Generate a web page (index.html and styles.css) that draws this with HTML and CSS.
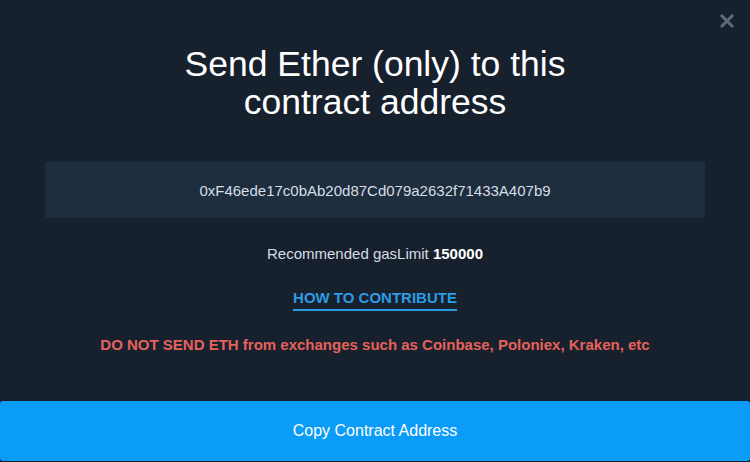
FILE: index.html
```html
<!DOCTYPE html>
<html>
<head>
<meta charset="utf-8">
<link rel="stylesheet" href="styles.css">
</head>
<body>
<div class="modal">
  <button class="close" aria-label="Close">
    <svg width="16" height="16" viewBox="0 0 16 16"><path d="M2 2 L14 14 M14 2 L2 14" stroke="#5b6b7c" stroke-width="3" stroke-linecap="butt"/></svg>
  </button>
  <h1 class="title">Send Ether (only) to this<br>contract address</h1>
  <div class="address">0xF46ede17c0bAb20d87Cd079a2632f71433A407b9</div>
  <p class="gas">Recommended gasLimit <b>150000</b></p>
  <a class="how" href="#">HOW TO CONTRIBUTE</a>
  <p class="warn">DO NOT SEND ETH from exchanges such as Coinbase, Poloniex, Kraken, etc</p>
  <div class="spacer"></div>
  <button class="copy">Copy Contract Address</button>
</div>
</body>
</html>
```
FILE: styles.css
```css
html, body {
  margin: 0;
  padding: 0;
  background: #17202d;
}
body {
  font-family: "Liberation Sans", Arial, sans-serif;
  width: 750px;
  height: 462px;
  overflow: hidden;
}
.modal {
  position: relative;
  width: 750px;
  height: 462px;
  display: flex;
  flex-direction: column;
  align-items: center;
  box-sizing: border-box;
  padding-top: 45px;
}
.close {
  position: absolute;
  top: 13px;
  right: 15px;
  background: none;
  border: 0;
  padding: 0;
  width: 16px;
  height: 16px;
  cursor: pointer;
}
.close svg { display: block; }
.title {
  margin: 0;
  font-weight: normal;
  color: #ffffff;
  font-size: 35.5px;
  line-height: 38px;
  text-align: center;
}
.address {
  margin-top: 41px;
  width: 660px;
  height: 56px;
  box-sizing: border-box;
  background: #1e2e3e;
  border-radius: 2px;
  color: #d6dde5;
  font-size: 15px;
  display: flex;
  align-items: center;
  justify-content: center;
}
.gas {
  margin: 28px 0 0;
  color: #d6dde5;
  font-size: 15px;
  line-height: 16px;
}
.gas b { color: #ffffff; }
.how {
  margin-top: 28px;
  color: #2d9be3;
  font-weight: bold;
  font-size: 15px;
  line-height: 16px;
  text-decoration: none;
  border-bottom: 2px solid #2d9be3;
  padding-bottom: 3px;
}
.warn {
  margin: 26px 0 0;
  color: #e5625c;
  font-weight: bold;
  font-size: 15px;
  line-height: 16px;
}
.spacer { flex: 1; }
.copy {
  width: 750px;
  height: 60px;
  margin-bottom: 1px;
  border: 0;
  border-radius: 3px;
  background: #0a9cf7;
  color: #ffffff;
  font-family: "Liberation Sans", Arial, sans-serif;
  font-size: 16px;
  cursor: pointer;
}
```
